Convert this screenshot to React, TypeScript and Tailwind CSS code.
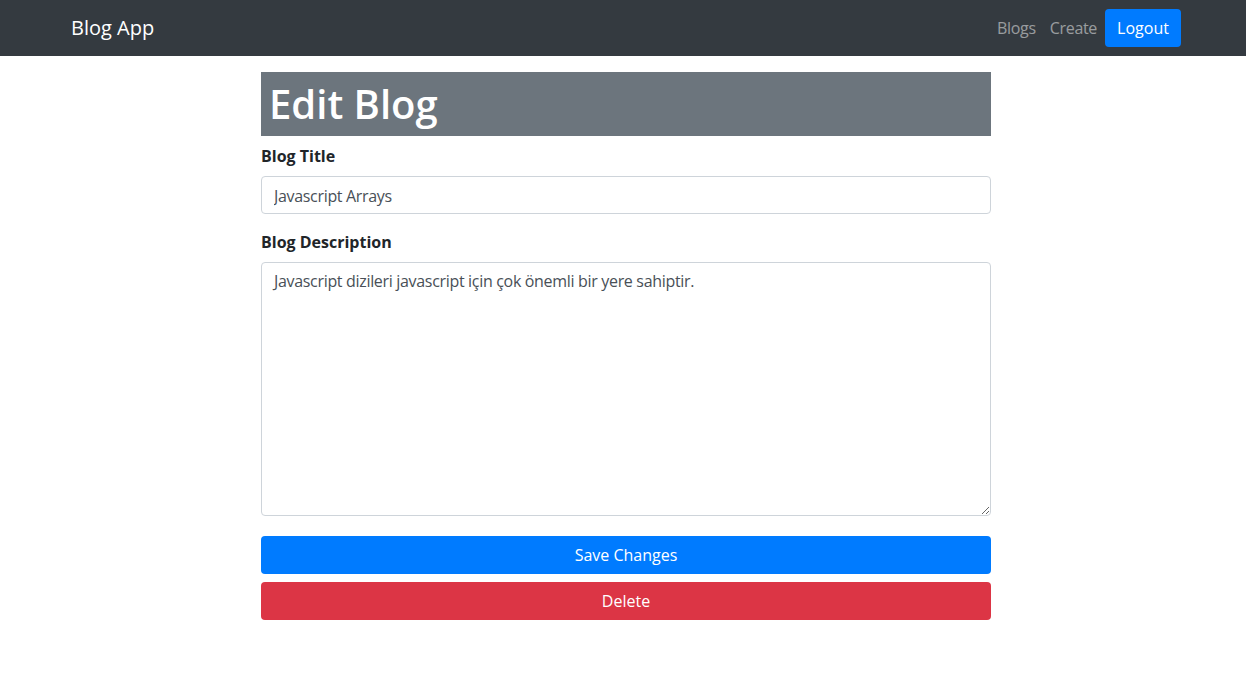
import { useState } from "react";

export default function App() {
  const [title, setTitle] = useState("Javascript Arrays");
  const [description, setDescription] = useState(
    "Javascript dizileri javascript için çok önemli bir yere sahiptir."
  );

  return (
    <div className="min-h-screen bg-white font-['Open_Sans',sans-serif] text-[#212529]">
      <nav className="h-14 bg-[#343a40] flex items-center pl-[71px] pr-[65px]">
        <span className="text-white text-[20px] leading-[30px]">Blog App</span>
        <div className="ml-auto flex items-center">
          <a className="text-white/50 text-base pl-2 pr-[8px] leading-6 tracking-[-0.02em]">Blogs</a>
          <a className="text-white/50 text-base pl-[6px] pr-2 leading-6 tracking-[-0.02em]">Create</a>
          <button className="h-[38px] w-[76px] rounded bg-[#007bff] text-white text-base">
            Logout
          </button>
        </div>
      </nav>

      <main className="w-[730px] ml-[261px] pt-4">
        <h1 className="bg-[#6c757d] text-white text-[40px] leading-[48px] font-semibold px-2 py-2 mb-2">
          Edit Blog
        </h1>

        <form onSubmit={(e) => e.preventDefault()} className="flex flex-col">
          <label className="font-bold text-base leading-6 mb-2">Blog Title</label>
          <input
            type="text"
            value={title}
            onChange={(e) => setTitle(e.target.value)}
            className="h-[38px] px-3 pt-[2px] border border-[#ced4da] rounded text-[#495057] text-base tracking-[-0.02em] mb-4 outline-none"
          />

          <label className="font-bold text-base leading-6 mb-2">Blog Description</label>
          <textarea
            value={description}
            onChange={(e) => setDescription(e.target.value)}
            className="h-[254px] px-3 py-[6px] border border-[#ced4da] rounded text-[#495057] text-base leading-6 tracking-[-0.02em] mb-5 outline-none"
          />

          <button
            type="submit"
            className="h-[38px] rounded bg-[#007bff] text-white text-base mb-2"
          >
            Save Changes
          </button>
          <button type="button" className="h-[38px] rounded bg-[#dc3545] text-white text-base">
            Delete
          </button>
        </form>
      </main>
    </div>
  );
}
